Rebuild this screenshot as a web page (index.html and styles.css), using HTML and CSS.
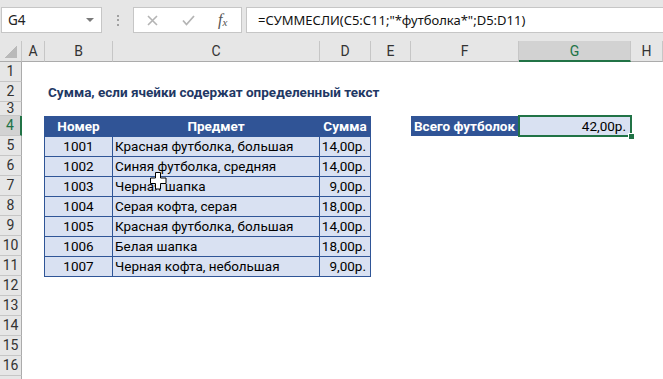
FILE: index.html
```html
<!DOCTYPE html>
<html lang="ru">
<head>
    <meta charset="UTF-8">
    <meta name="viewport" content="width=device-width, initial-scale=1.0">
    <title>СУММЕСЛИ</title>
    <link rel="stylesheet" href="styles.css">
</head>
<body>
    <div class="toolbar">
        <div class="namebox"><span>G4</span><span class="caret"></span></div>
        <div class="grip"></div>
        <div class="fxbox">
            <svg class="ico-x" width="11" height="11" viewBox="0 0 11 11"><path d="M1 1L10 10M10 1L1 10" stroke="#b4b4b4" stroke-width="1.6" fill="none"/></svg>
            <svg class="ico-ok" width="13" height="11" viewBox="0 0 13 11"><path d="M1 5.5L4.5 9.5L12 1" stroke="#b4b4b4" stroke-width="1.8" fill="none"/></svg>
            <span class="fx">f<sub>x</sub></span>
        </div>
        <div class="formula">=СУММЕСЛИ(C5:C11;"*футболка*";D5:D11)</div>
    </div>

    <div class="sheet">
        <div class="colhead corner"><span class="tri"></span></div>
        <div class="colhead">A</div>
        <div class="colhead">B</div>
        <div class="colhead">C</div>
        <div class="colhead">D</div>
        <div class="colhead">E</div>
        <div class="colhead">F</div>
        <div class="colhead sel">G</div>
        <div class="colhead">H</div>

        <div class="rowheads">
            <div class="rh">1</div>
            <div class="rh">2</div>
            <div class="rh short">3</div>
            <div class="rh sel">4</div>
            <div class="rh">5</div>
            <div class="rh">6</div>
            <div class="rh">7</div>
            <div class="rh">8</div>
            <div class="rh">9</div>
            <div class="rh">10</div>
            <div class="rh">11</div>
            <div class="rh">12</div>
            <div class="rh">13</div>
            <div class="rh">14</div>
            <div class="rh">15</div>
            <div class="rh">16</div>
            <div class="rh"></div>
        </div>

        <div class="title">Сумма, если ячейки содержат определенный текст</div>

        <div class="data">
            <div class="h">Номер</div>
            <div class="h">Предмет</div>
            <div class="h">Сумма</div>

            <div class="num">1001</div><div class="txt">Красная футболка, большая</div><div class="sum">14,00р.</div>
            <div class="num">1002</div><div class="txt">Синяя футболка, средняя</div><div class="sum">14,00р.</div>
            <div class="num">1003</div><div class="txt">Черная шапка</div><div class="sum">9,00р.</div>
            <div class="num">1004</div><div class="txt">Серая кофта, серая</div><div class="sum">18,00р.</div>
            <div class="num">1005</div><div class="txt">Красная футболка, большая</div><div class="sum">14,00р.</div>
            <div class="num">1006</div><div class="txt">Белая шапка</div><div class="sum">18,00р.</div>
            <div class="num">1007</div><div class="txt">Черная кофта, небольшая</div><div class="sum">9,00р.</div>
        </div>

        <div class="total-label">Всего футболок</div>
        <div class="total">42,00р.</div>
    </div>

    <svg class="cursor" width="17" height="18" viewBox="0 0 17 18">
        <path d="M5.5 0.5H10.5V6H16V11.5H10.5V17H5.5V11.5H0.5V6H5.5Z" fill="#fff" stroke="#000" stroke-width="1"/>
    </svg>
</body>
</html>
```

FILE: styles.css
```css
body {
    margin: 0;
    font-family: Roboto, "Liberation Sans", sans-serif;
    font-size: 13.5px;
    color: #000;
    background: #fff;
    overflow: hidden;
    position: relative;
    height: 379px;
}

/* formula bar */
.toolbar {
    display: flex;
    align-items: flex-start;
    height: 41px;
    padding: 7px 0 0 1px;
    box-sizing: border-box;
    background: #e6e6e6;
    font-family: "Noto Sans", sans-serif;
}
.namebox {
    width: 101px;
    height: 26px;
    box-sizing: border-box;
    display: flex;
    align-items: center;
    justify-content: space-between;
    padding: 0 7px 0 6px;
    background: #fff;
    border: 1px solid #c6c6c6;
    color: #222;
    font-size: 13.5px;
}
.caret {
    border-left: 4px solid transparent;
    border-right: 4px solid transparent;
    border-top: 4px solid #7a7a7a;
}
.grip {
    width: 2px;
    height: 11px;
    margin: 8px 14px 0 15px;
    background: repeating-linear-gradient(to bottom, #a0a0a0 0 2px, transparent 2px 4.5px);
}
.fxbox {
    width: 109px;
    height: 26px;
    box-sizing: border-box;
    display: flex;
    align-items: center;
    padding-left: 13px;
    background: #fff;
    border: 1px solid #c6c6c6;
}
.ico-ok {
    margin-left: 24px;
}
.fx {
    margin-left: 23px;
    font-family: "Liberation Serif", serif;
    font-style: italic;
    font-size: 16px;
    color: #555;
}
.fx sub {
    font-size: 11px;
    vertical-align: -1px;
}
.formula {
    flex: 1;
    height: 26px;
    box-sizing: border-box;
    margin-left: 4px;
    padding-left: 11px;
    background: #fff;
    border: 1px solid #c6c6c6;
    border-right: none;
    line-height: 24px;
    font-size: 13px;
    color: #111;
    white-space: nowrap;
}

/* sheet grid */
.sheet {
    display: grid;
    grid-template-columns: 22px 23px 68px 207px 51px 40px 108px 112px 1fr;
    grid-template-rows: 21px 20px 20px 14px repeat(14, 20px);
    font-size: 13.5px;
}
.colhead {
    display: flex;
    align-items: center;
    justify-content: center;
    box-sizing: border-box;
    background: #e6e6e6;
    border-right: 1px solid #c6c6c6;
    border-bottom: 1px solid #ababab;
    color: #333;
    font-size: 14px;
}
.colhead.sel {
    background: #d2d2d2;
    border-bottom: 2px solid #217346;
    color: #217346;
}
.corner {
    align-items: flex-end;
    justify-content: flex-end;
    padding: 0 4px 3px 0;
}
.tri {
    width: 12px;
    height: 12px;
    background: linear-gradient(135deg, transparent 50%, #b9b9b9 50%);
}
.rowheads {
    grid-column: 1;
    grid-row: 2 / -1;
    display: flex;
    flex-direction: column;
}
.rh {
    flex: none;
    height: 20px;
    box-sizing: border-box;
    background: #e6e6e6;
    border-right: 1px solid #ababab;
    border-bottom: 1px solid #c6c6c6;
    text-align: center;
    line-height: 19px;
    font-size: 14px;
    color: #333;
}
.rh.short {
    height: 14px;
    line-height: 13px;
}
.rh.sel {
    background: #d2d2d2;
    border-right: 2px solid #217346;
    color: #217346;
}

.title {
    grid-column: 3 / 8;
    grid-row: 3;
    align-self: center;
    padding-left: 3px;
    font-weight: bold;
    color: #1f3864;
    white-space: nowrap;
}

/* table B4:D11 */
.data {
    grid-column: 3 / 6;
    grid-row: 5 / 13;
    display: grid;
    grid-template-columns: 68px 207px 51px;
    grid-auto-rows: 20px;
    margin: 0 0 -1px -1px;
    border-left: 1px solid #2f5597;
    border-bottom: 1px solid #2f5597;
    background: #d9e1f2;
}
.data div {
    box-sizing: border-box;
    border-right: 1px solid #2f5597;
    border-top: 1px solid #2f5597;
    line-height: 18px;
    white-space: nowrap;
}
.data .h {
    background: #305496;
    border-color: #305496;
    color: #fff;
    font-weight: bold;
    text-align: center;
}
.num {
    text-align: center;
}
.txt {
    padding-left: 2px;
}
.sum {
    text-align: right;
    padding-right: 4px;
}

.total-label {
    grid-column: 7;
    grid-row: 5;
    padding-left: 3px;
    line-height: 20px;
    background: #305496;
    color: #fff;
    font-weight: bold;
    white-space: nowrap;
}
.total {
    grid-column: 8;
    grid-row: 5;
    position: relative;
    padding-right: 5px;
    line-height: 20px;
    text-align: right;
    background: #d9e1f2;
}
.total::after {
    content: "";
    position: absolute;
    top: -1px;
    left: -1px;
    right: -1px;
    bottom: -1px;
    border: 2px solid #217346;
}
.total::before {
    content: "";
    position: absolute;
    right: -4px;
    bottom: -4px;
    width: 5px;
    height: 5px;
    background: #217346;
    border: 1px solid #fff;
    z-index: 1;
}

.cursor {
    position: absolute;
    left: 150px;
    top: 172px;
}
```
